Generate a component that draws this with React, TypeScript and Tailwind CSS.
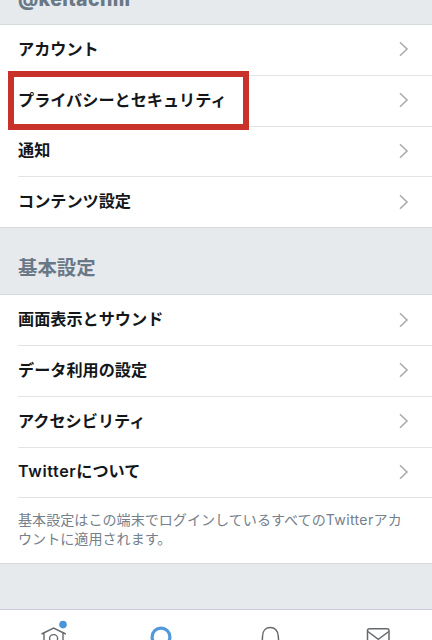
import { ReactNode } from "react";

type Item = {
  label: ReactNode;
  highlighted?: boolean;
};

const accountItems: Item[] = [
  { label: "アカウント" },
  { label: "プライバシーとセキュリティ", highlighted: true },
  { label: "通知" },
  { label: "コンテンツ設定" },
];

const generalItems: Item[] = [
  { label: "画面表示とサウンド" },
  { label: "データ利用の設定" },
  { label: "アクセシビリティ" },
  {
    label: (
      <>
        <span className="tracking-[0.6px]">Twitter</span>について
      </>
    ),
  },
];

const Chevron = () => (
  <svg width="10" height="16" viewBox="0 0 10 16" fill="none">
    <path d="M1 1.2 8 8 1 14.8" stroke="#a9abae" strokeWidth="1.6" />
  </svg>
);

const SettingsRow = ({ item, last }: { item: Item; last?: boolean }) => (
  <div className={`relative pl-[18px] ${last ? "h-[50px]" : "h-[50.75px]"}`}>
    <div
      className={`flex h-full items-center justify-between pr-[23px] pb-px ${
        last ? "" : "border-b border-[#e1e4e7]"
      }`}
    >
      <span className="pb-px text-[16.15px] leading-6 font-semibold whitespace-nowrap text-[#14171a]">
        {item.label}
      </span>
      <Chevron />
    </div>
    {item.highlighted && (
      <div className="absolute -top-[5px] left-2 z-10 h-[59px] w-[241px] border-[6px] border-[#c9322b]" />
    )}
  </div>
);

const SettingsList = ({ items, children }: { items: Item[]; children?: ReactNode }) => (
  <div className="border-y border-[#d5dadf] bg-white">
    {items.map((item, i) => (
      <SettingsRow key={i} item={item} last={!children && i === items.length - 1} />
    ))}
    {children}
  </div>
);

const TabBar = () => (
  <nav className="grid h-[31px] shrink-0 grid-cols-4 overflow-hidden border-t border-[#c9cbdc] bg-white">
    {/* home */}
    <svg className="w-[108px]" height="48" viewBox="0 0 108 48" fill="none">
      <path
        d="M41.5 24 53.6 18 65.8 24M44 23v18h19V23"
        stroke="#66696d"
        strokeWidth="1.4"
      />
      <circle cx="53.6" cy="28.6" r="4" stroke="#66696d" strokeWidth="1.4" />
      <circle cx="63" cy="14.6" r="3.8" fill="#4a94d8" />
    </svg>
    {/* search */}
    <svg className="w-[108px]" height="48" viewBox="0 0 108 48" fill="none">
      <circle cx="53" cy="27" r="8.9" stroke="#5298db" strokeWidth="3.2" />
      <path d="M59 34l6 6" stroke="#5298db" strokeWidth="3.2" />
    </svg>
    {/* notifications */}
    <svg className="w-[108px]" height="48" viewBox="0 0 108 48" fill="none">
      <path
        d="M46 36l.5-9.5C46.5 20.5 50 17.5 54.3 17.5s8 3 8 9l.7 9.5z"
        stroke="#66696d"
        strokeWidth="1.5"
      />
    </svg>
    {/* messages */}
    <svg className="w-[108px]" height="48" viewBox="0 0 108 48" fill="none">
      <rect x="43.5" y="18.7" width="21.5" height="18" rx="2" stroke="#66696d" strokeWidth="1.5" />
      <path d="M43.8 21.5 54.3 29.3 64.8 21.5" stroke="#66696d" strokeWidth="1.5" />
    </svg>
  </nav>
);

const App = () => {
  return (
    <div className="flex h-[640px] w-[432px] flex-col overflow-hidden bg-[#e6eaed] font-[Inter,'Noto_Sans_CJK_JP',sans-serif]">
      <div className="flex h-6 shrink-0 items-end pl-[18px]">
        <h2 className="mb-[13px] text-[19.5px] leading-6 font-extrabold tracking-[0.4px] text-[#697887]">
          @keitachiii
        </h2>
      </div>
      <SettingsList items={accountItems} />
      <div className="flex h-[66px] shrink-0 items-center pl-[18px]">
        <h2 className="mt-3.5 text-[19.4px] leading-7 font-semibold text-[#697887]">基本設定</h2>
      </div>
      <SettingsList items={generalItems}>
        <p className="h-[64.5px] pt-3 pl-[18px] text-[14.08px] leading-[19px] text-[#75808b]">
          基本設定はこの端末でログインしているすべての
          <span className="tracking-[0.35px]">Twitter</span>アカ
          <br />
          ウントに適用されます。
        </p>
      </SettingsList>
      <div className="flex-1" />
      <TabBar />
    </div>
  );
};

export default App;
